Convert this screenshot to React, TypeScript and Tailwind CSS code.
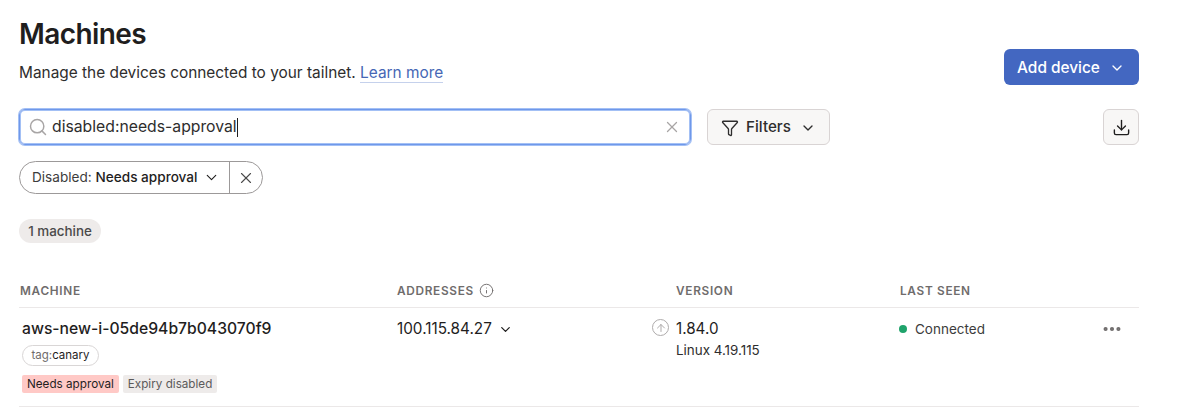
import React from "react";
import { ChevronDown, Download, Ellipsis, Filter, Info, Search, X, ArrowUp } from "lucide-react";

function App() {
  return (
    <div className="w-[1182px] h-[410px] overflow-hidden bg-white pl-[19px] pr-[43px] pt-[16px] text-[#1f1e1e] font-['Inter',sans-serif]">
      <div className="flex justify-between">
        <div>
          <h1 className="text-[28px] leading-[36px] font-semibold tracking-[-0.6px]">Machines</h1>
          <p className="mt-[9px] text-[15.4px] leading-[24px] text-[#2e2d2d]">
            Manage the devices connected to your tailnet.{" "}
            <span className="text-[#4667b5] border-b border-[#c5d1ec]">Learn more</span>
          </p>
        </div>
        <button className="mt-[33px] h-[36px] w-[135px] flex items-center justify-center gap-[9px] rounded-md bg-[#4367c1] pt-[1px] pr-[1px] text-white text-[15.4px] font-medium">
          Add device
          <ChevronDown size={16} strokeWidth={2} />
        </button>
      </div>

      <div className="mt-[24px] flex items-center">
        <div className="flex h-[36px] w-[672px] items-center rounded-md border border-[#6f98ea] ring-1 ring-[#a3c0f5] shadow-[inset_0_0_0_1px_#a3c0f5] pl-[8px] pr-[9px]">
          <Search size={20} className="text-[#a8a5a5]" strokeWidth={1.75} />
          <span className="ml-[4px] text-[15.75px] text-[#2e2d2d]">disabled:needs-approval</span>
          <span className="h-[19px] w-px bg-[#1f1e1e]" />
          <X size={18} strokeWidth={1.75} className="ml-auto text-[#a8a5a5]" />
        </div>
        <button className="ml-[16px] flex h-[36px] w-[123px] items-center justify-center gap-[7px] rounded-md border border-[#d9d4d4] bg-[#f8f7f6] pt-[1px] text-[15.2px] font-medium text-[#2e2d2d]">
          <Filter size={18} strokeWidth={1.75} />
          Filters
          <ChevronDown size={16} strokeWidth={2} className="ml-[2px]" />
        </button>
        <button className="ml-auto flex h-[36px] w-[36px] items-center justify-center rounded-md border border-[#d9d4d4] bg-[#f8f7f6]">
          <Download size={19} strokeWidth={1.75} />
        </button>
      </div>

      <div className="mt-[16px] flex h-[33px] w-[244px] items-center rounded-full border border-[#9c9999] text-[13.6px]">
        <div className="flex h-full w-[210px] items-center justify-between border-r border-[#9c9999] pl-[12px] pr-[9px]">
          <span className="text-[#3d3c3c]">
            Disabled: <span className="font-medium text-[#1f1e1e]">Needs approval</span>
          </span>
          <ChevronDown size={17} strokeWidth={1.6} />
        </div>
        <div className="flex flex-1 items-center justify-center">
          <X size={18} strokeWidth={1.5} className="text-[#4a4949]" />
        </div>
      </div>

      <div className="mt-[25px] flex h-[24px] w-[82px] items-center justify-center rounded-full bg-[#eeebea] pt-[1px] text-[13.4px] font-medium text-[#4a4949]">
        1 machine
      </div>

      <div className="mt-[38px] grid grid-cols-[378px_279px_224px_1fr] h-[27px] border-b border-[#ebe8e8] pt-[2px] text-[11.8px] font-semibold tracking-[0.7px] text-[#6f6c6c] leading-[16px]">
        <div className="pl-px">MACHINE</div>
        <div className="flex items-start gap-[5px]">
          ADDRESSES
          <Info size={15} strokeWidth={1.5} />
        </div>
        <div>VERSION</div>
        <div>LAST SEEN</div>
      </div>

      <div className="grid h-[99px] grid-cols-[378px_279px_224px_1fr] border-b border-[#ebe8e8] pt-[10px]">
        <div className="pl-[3px]">
          <div className="text-[15.7px] leading-[22px] font-[550]">aws-new-i-05de94b7b043070f9</div>
          <div className="mt-[5px] flex h-[21px] w-[77px] items-center justify-center rounded-full border border-[#d9d6d6] text-[11.5px]">
            <span className="text-[#6f6c6c]">tag:</span>canary
          </div>
          <div className="mt-[9px] flex gap-[4px] text-[11.7px] leading-[18px]">
            <span className="rounded-[2px] bg-[#ffc9c6] px-[5px]">Needs approval</span>
            <span className="rounded-[2px] bg-[#eeebea] px-[5px] text-[#5c5a5a]">Expiry disabled</span>
          </div>
        </div>
        <div className="flex h-[22px] items-center gap-[6px] text-[15.3px]">
          100.115.84.27
          <ChevronDown size={15} strokeWidth={2} />
        </div>
        <div className="relative">
          <div className="absolute left-[-24px] top-[1px] flex h-[17px] w-[17px] items-center justify-center rounded-full border-[1.5px] border-[#aeabab]">
            <ArrowUp size={12} strokeWidth={2} className="text-[#aeabab]" />
          </div>
          <div className="text-[15.2px] leading-[22px]">1.84.0</div>
          <div className="text-[13.4px] leading-[20px] text-[#2e2d2d]">Linux 4.19.115</div>
        </div>
        <div className="flex h-[22px] items-start justify-between pr-[16px]">
          <div className="-ml-px flex h-[22px] items-center gap-[8px] text-[13.5px] text-[#3d3c3c]">
            <span className="h-[8px] w-[8px] rounded-full bg-[#1fa36b]" />
            Connected
          </div>
          <Ellipsis size={22} strokeWidth={2.5} className="text-[#6f6c6c]" />
        </div>
      </div>
    </div>
  );
}

export default App;
